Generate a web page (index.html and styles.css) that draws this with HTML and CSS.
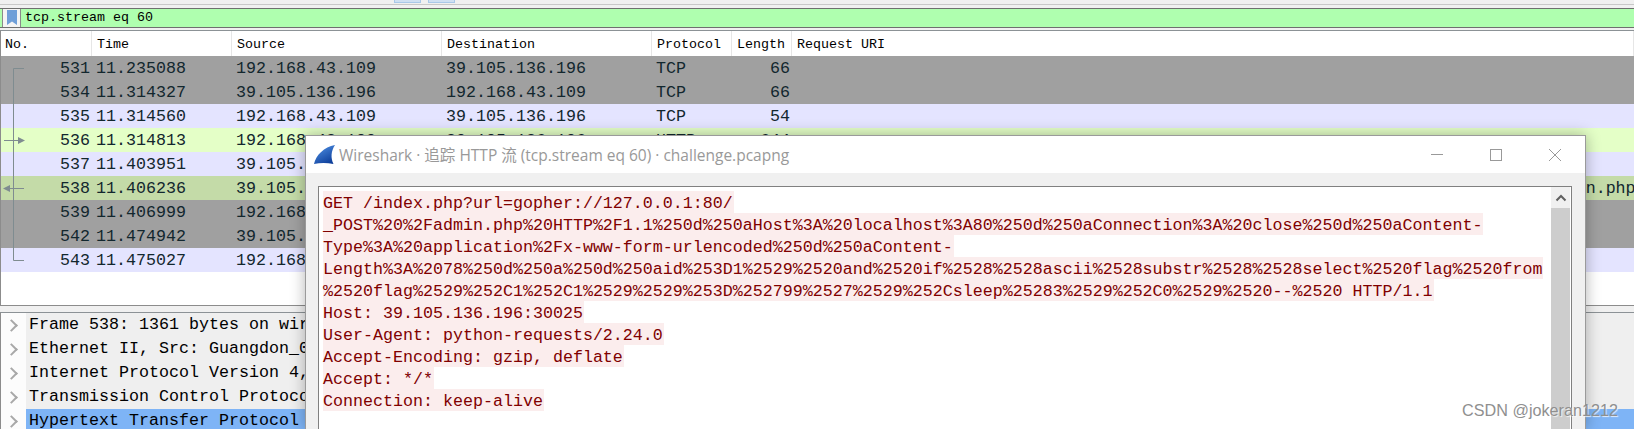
FILE: index.html
```html
<!DOCTYPE html>
<html lang="zh">
<head>
<meta charset="utf-8">
<title>Wireshark</title>
<link rel="stylesheet" href="styles.css">
</head>
<body>
<div class="app">
  <div class="toolbar"><span class="tool-btn"></span><span class="tool-btn"></span></div>
  <div class="filter">
    <span class="bookmark"><svg width="10" height="15" viewBox="0 0 10 15"><path d="M0 0H10V15L5 11.5 0 15Z" fill="#6f9fd8"/></svg></span>
    <span class="filter-text">tcp.stream eq 60</span>
  </div>
  <div class="packets">
    <div class="row head"><span>No.</span><span>Time</span><span>Source</span><span>Destination</span><span>Protocol</span><span>Length</span><span>Request URI</span></div>
    <div class="row grey"><span class="num">531</span><span>11.235088</span><span>192.168.43.109</span><span>39.105.136.196</span><span>TCP</span><span class="len">66</span><span></span></div>
    <div class="row grey"><span class="num">534</span><span>11.314327</span><span>39.105.136.196</span><span>192.168.43.109</span><span>TCP</span><span class="len">66</span><span></span></div>
    <div class="row lav"><span class="num">535</span><span>11.314560</span><span>192.168.43.109</span><span>39.105.136.196</span><span>TCP</span><span class="len">54</span><span></span></div>
    <div class="row lime"><span class="num">536</span><span>11.314813</span><span>192.168.43.109</span><span>39.105.136.196</span><span>HTTP</span><span class="len">644</span><span></span></div>
    <div class="row lav"><span class="num">537</span><span>11.403951</span><span>39.105.136.196</span><span>192.168.43.109</span><span>TCP</span><span class="len">54</span><span></span></div>
    <div class="row olive"><span class="num">538</span><span>11.406236</span><span>39.105.136.196</span><span>192.168.43.109</span><span>HTTP</span><span class="len">1361</span><span>http://39.105.136.196:30025/index.php?url=gopher://127.0.0.1:80/_POST%20%2Fadmin.php</span></div>
    <div class="row grey"><span class="num">539</span><span>11.406999</span><span>192.168.43.109</span><span>39.105.136.196</span><span>TCP</span><span class="len">54</span><span></span></div>
    <div class="row grey"><span class="num">542</span><span>11.474942</span><span>39.105.136.196</span><span>192.168.43.109</span><span>TCP</span><span class="len">54</span><span></span></div>
    <div class="row lav"><span class="num">543</span><span>11.475027</span><span>192.168.43.109</span><span>39.105.136.196</span><span>TCP</span><span class="len">54</span><span></span></div>
    <svg class="flow" width="30" height="216" viewBox="0 0 30 216">
      <path d="M23 12.5H12.5V204.5H23" fill="none" stroke="#7f8c90"/>
      <path d="M3 84.5H17" fill="none" stroke="#7f8c90"/>
      <path d="M17 81L24 84.5 17 88Z" fill="#7f8c90"/>
      <path d="M9 132.5H23" fill="none" stroke="#7f8c90"/>
      <path d="M9 129L2 132.5 9 136Z" fill="#7f8c90"/>
    </svg>
  </div>
  <div class="details">
    <div class="tree"><span class="chev"></span><span class="tree-text">Frame 538: 1361 bytes on wire</span></div>
    <div class="tree"><span class="chev"></span><span class="tree-text">Ethernet II, Src: Guangdon_0</span></div>
    <div class="tree"><span class="chev"></span><span class="tree-text">Internet Protocol Version 4, Src</span></div>
    <div class="tree"><span class="chev"></span><span class="tree-text">Transmission Control Protocol</span></div>
    <div class="tree active"><span class="chev"></span><span class="tree-text">Hypertext Transfer Protocol</span></div>
  </div>
</div>

<section class="window">
  <header class="titlebar">
    <svg class="fin" width="21" height="20" viewBox="0 0 21 20">
      <defs><linearGradient id="fin" x1="0.2" y1="0" x2="0.8" y2="1"><stop offset="0" stop-color="#4f90e4"/><stop offset="1" stop-color="#0a3a96"/></linearGradient></defs>
      <path d="M0 19C2 10 10 2 21 0 17 6 16.500 13 19.500 19 13 17.500 6 17.500 0 19Z" fill="url(#fin)"/>
    </svg>
    <span class="win-title">Wireshark · 追踪 HTTP 流 (tcp.stream eq 60) · challenge.pcapng</span>
    <span class="win-ctrl">
      <svg width="14" height="14" viewBox="0 0 14 14"><path d="M1 6.500H13" stroke="#999"/></svg>
      <svg width="14" height="14" viewBox="0 0 14 14"><rect x="1.500" y="1.500" width="11" height="11" fill="none" stroke="#999"/></svg>
      <svg width="14" height="14" viewBox="0 0 14 14"><path d="M1 1L13 13M13 1L1 13" stroke="#999"/></svg>
    </span>
  </header>
  <div class="win-body">
    <div class="stream">
      <div class="stream-text">
        <p>GET /index.php?url=gopher://127.0.0.1:80/</p>
        <p>_POST%20%2Fadmin.php%20HTTP%2F1.1%250d%250aHost%3A%20localhost%3A80%250d%250aConnection%3A%20close%250d%250aContent-</p>
        <p>Type%3A%20application%2Fx-www-form-urlencoded%250d%250aContent-</p>
        <p>Length%3A%2078%250d%250a%250d%250aid%253D1%2529%2520and%2520if%2528%2528ascii%2528substr%2528%2528select%2520flag%2520from</p>
        <p>%2520flag%2529%252C1%252C1%2529%2529%253D%252799%2527%2529%252Csleep%25283%2529%252C0%2529%2520--%2520 HTTP/1.1</p>
        <p>Host: 39.105.136.196:30025</p>
        <p>User-Agent: python-requests/2.24.0</p>
        <p>Accept-Encoding: gzip, deflate</p>
        <p>Accept: */*</p>
        <p>Connection: keep-alive</p>
      </div>
      <div class="scrollbar">
        <span class="scroll-up"><svg width="12" height="8" viewBox="0 0 12 8"><path d="M1.500 6.500L6 2 10.500 6.500" fill="none" stroke="#606060" stroke-width="2"/></svg></span>
        <span class="scroll-thumb"></span>
      </div>
    </div>
  </div>
</section>
<div class="watermark">CSDN @jokeran1212</div>
</body>
</html>
```
FILE: styles.css
```css
* { box-sizing: border-box; }
html, body { margin: 0; height: 429px; overflow: hidden; background: #f0f0f0; }
body { position: relative; font-family: "Liberation Mono", monospace; color: #12272e; }

.app { display: flex; flex-direction: column; height: 429px; }

.toolbar { height: 5px; display: flex; gap: 7px; padding-left: 394px; border-bottom: 1px solid #c8c8c8; background: #f0f0f0; align-items: flex-start; }
.tool-btn { width: 27px; height: 3px; background: #cfe0f2; border: 1px solid #a9c8e8; border-top: 0; }

.filter { margin-top: 3px; height: 20px; display: flex; align-items: center; background: #afffaf; border-top: 1px solid #6f6f6f; border-bottom: 1px solid #6f6f6f; }
.bookmark { width: 19px; height: 18px; margin-left: 2px; padding: 1px 0 0 4px; background: #f4f4f4; border: 1px solid #8a8a8a; border-width: 0 1px 0 1px; display: flex; }
.filter-text { padding-left: 4px; padding-bottom: 2px; font-size: 13.33px; color: #000; }

.packets { position: relative; margin-top: 2px; height: 276px; background: #fff; border-top: 1px solid #8c9296; border-left: 1px solid #8c8c8c; border-bottom: 1px solid #8c8c8c; overflow: hidden; flex: none; }
.row { display: grid; grid-template-columns: 91px 140px 210px 210px 80px 60px 1fr; height: 24px; align-items: center; font-size: 16.67px; white-space: nowrap; }
.row > span { padding-left: 4px; overflow: visible; }
.row > .num { padding: 0 2px 0 0; text-align: right; }
.row > .len { padding: 0 2px 0 0; text-align: right; }
.head { height: 25px; font-size: 13.33px; color: #000; background: #fff; }
.head > span { height: 25px; line-height: 27px; padding-left: 5px; border-right: 1px solid #e6e6e6; }
.head > span:first-child { padding-left: 4px; }
.grey { background: #a0a0a0; }
.lav { background: #e4e4ff; }
.lime { background: #e4ffc7; }
.olive { background: #c4dba8; }
.flow { position: absolute; left: 0; top: 25px; }

.details { margin-top: 6px; flex: 1; background: #fcfcfc; border-top: 1px solid #8c9296; border-left: 1px solid #8c8c8c; overflow: hidden; }
.tree { display: flex; height: 24px; align-items: center; font-size: 16.67px; color: #000; white-space: nowrap; }
.chev { width: 25px; flex: none; display: flex; justify-content: center; }
.chev::before { content: ""; width: 7px; height: 7px; border-top: 2px solid #a8a8a8; border-right: 2px solid #a8a8a8; transform: rotate(45deg); margin-right: 4px; }
.tree-text { flex: 1; height: 24px; line-height: 24px; padding-left: 3px; background: #efefef; }
.active .tree-text { background: #7eb4f6; }

.window { position: absolute; left: 305px; top: 135px; width: 1281px; height: 294px; display: flex; flex-direction: column; background: #f0f0f0; border: 1px solid #9a9a9a; border-bottom: 0; box-shadow: 0 0 14px rgba(0, 0, 0, .3); }
.titlebar { height: 37px; flex: none; background: #fff; display: flex; align-items: center; padding-left: 8px; }
.fin { flex: none; }
.win-title { margin-left: 4px; font-family: "Open Sans", "Noto Sans CJK SC", sans-serif; font-size: 15.5px; color: #999; white-space: nowrap; }
.win-ctrl { margin-left: auto; display: flex; gap: 45px; padding-right: 23px; }
.win-body { flex: 1; display: flex; padding: 13px 13px 0 12px; }
.stream { flex: 1; background: #fff; border: 1px solid #808080; border-bottom: 0; display: flex; }
.stream-text { flex: 1; padding: 4px 0 0 4px; font-size: 16.67px; color: #800000; }
.stream-text p { margin: 0; width: fit-content; height: 22px; line-height: 26px; padding-right: 1px; background: #fbeded; white-space: pre; }
.scrollbar { width: 19px; margin-right: 1px; display: flex; flex-direction: column; background: #f0f0f0; }
.scroll-up { height: 21px; display: flex; align-items: center; justify-content: center; }
.scroll-thumb { flex: 1; background: #cdcdcd; }

.watermark { position: absolute; right: 16px; top: 401px; font-family: "Liberation Sans", sans-serif; font-size: 16.2px; color: #8f8f8f; text-shadow: 1px 1px 1px rgba(255, 255, 255, .8); white-space: nowrap; }
```
